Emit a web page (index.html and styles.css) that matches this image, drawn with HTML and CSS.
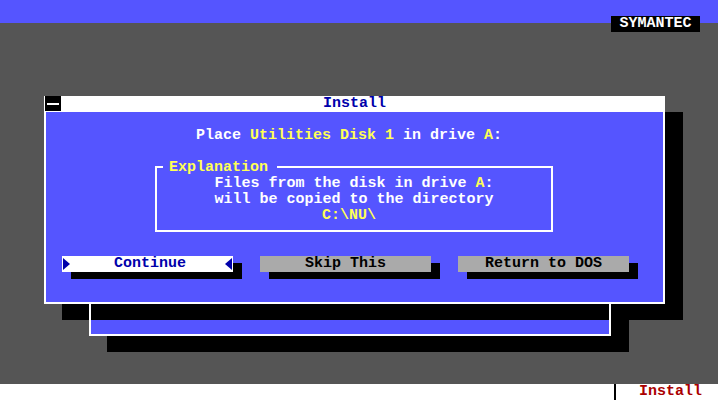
FILE: index.html
```html
<!DOCTYPE html>
<html lang="en">
<head>
    <meta charset="UTF-8">
    <title>Install</title>
    <link rel="stylesheet" href="styles.css">
</head>
<body>
    <div class="screen">
        <div class="topbar">
            <div class="brand">SYMANTEC</div>
        </div>

        <div class="desk">
            <!-- window left behind from the previous step -->
            <div class="back-shadow"></div>
            <div class="dialog-shadow"></div>
            <div class="back-window"></div>

            <div class="dialog">
                <div class="titlebar">
                    <span class="close-box"><span class="close-bar"></span></span>
                    <span class="title">Install</span>
                </div>

                <div class="prompt">Place <span class="hi">Utilities Disk 1</span> in drive <span class="hi">A</span>:</div>

                <div class="explain">
                    <span class="legend">Explanation</span>
                    <div class="line">Files from the disk in drive <span class="hi">A</span>:</div>
                    <div class="line">will be copied to the directory</div>
                    <div class="line path"><span class="hi">C:\NU\</span></div>
                </div>

                <div class="buttons">
                    <div class="btn btn-active">
                        <span class="arrow-right"></span>
                        <span class="btn-label">Continue</span>
                        <span class="arrow-left"></span>
                    </div>
                    <div class="btn">Skip This</div>
                    <div class="btn">Return to DOS</div>
                </div>
            </div>
        </div>

        <div class="statusbar">
            <span class="divider"></span>
            <span class="status-text">Install</span>
        </div>
    </div>
</body>
</html>
```

FILE: styles.css
```css
body {
    margin: 0;
    padding: 0;
    background-color: #555555;
    font-family: "Liberation Mono", "DejaVu Sans Mono", monospace;
    font-size: 15px;
    font-weight: bold;
    line-height: 16px;
}

.screen {
    width: 718px;
    height: 400px;
    display: flex;
    flex-direction: column;
    overflow: hidden;
}

.topbar {
    height: 23px;
    background-color: #5555ff;
    position: relative;
}

.brand {
    position: absolute;
    top: 16px;
    right: 18px;
    width: 89px;
    height: 16px;
    background-color: #000;
    color: #fff;
    text-align: center;
    z-index: 2;
}

.desk {
    flex: 1;
    position: relative;
}

/* Windows on the desktop */
.dialog-shadow {
    position: absolute;
    left: 62px;
    top: 89px;
    width: 621px;
    height: 208px;
    background-color: #000;
}

.back-shadow {
    position: absolute;
    left: 107px;
    top: 297px;
    width: 522px;
    height: 32px;
    background-color: #000;
}

.back-window {
    position: absolute;
    left: 89px;
    top: 281px;
    width: 522px;
    height: 32px;
    box-sizing: border-box;
    border: 2px solid #fff;
    border-top: none;
    background: linear-gradient(#000 0, #000 16px, #5555ff 16px);
}

.dialog {
    position: absolute;
    left: 44px;
    top: 73px;
    width: 621px;
    height: 208px;
    box-sizing: border-box;
    border: 2px solid #fff;
    border-top: none;
    background-color: #5555ff;
    color: #fff;
}

.titlebar {
    height: 16px;
    margin: 0 -2px;
    background-color: #fff;
    color: #0000aa;
    text-align: center;
    position: relative;
}

.close-box {
    position: absolute;
    left: 1px;
    top: 0;
    width: 16px;
    height: 15px;
    background-color: #000;
}

.close-bar {
    position: absolute;
    left: 2px;
    top: 7px;
    width: 12px;
    height: 2px;
    background-color: #fff;
}

.hi {
    color: #ffff55;
}

.prompt {
    margin-top: 16px;
    padding-left: 150px;
    height: 16px;
    white-space: pre;
}

.explain {
    position: relative;
    margin: 22px 0 0 109px;
    width: 398px;
    box-sizing: border-box;
    border: 2px solid #fff;
    padding: 8px 0 6px;
    text-align: center;
}

.legend {
    position: absolute;
    left: 6px;
    top: -8px;
    padding: 0 9px 0 6px;
    background-color: #5555ff;
    color: #ffff55;
}

.line {
    height: 16px;
    white-space: pre;
}

.path {
    padding-right: 10px;
}

.buttons {
    display: flex;
    gap: 27px;
    margin-top: 24px;
    padding-left: 16px;
}

.btn {
    width: 171px;
    height: 16px;
    background-color: #aaaaaa;
    color: #000;
    text-align: center;
    box-shadow: 9px 7px 0 #000;
}

.btn-active {
    background-color: #fff;
    color: #0000aa;
    display: flex;
    align-items: center;
    justify-content: space-between;
    padding: 0 1px 0 1px;
    box-sizing: border-box;
}

.btn-label {
    flex: 1;
    padding-left: 5px;
}

.arrow-right {
    width: 0;
    height: 0;
    border-left: 7px solid #0000aa;
    border-top: 6px solid transparent;
    border-bottom: 6px solid transparent;
}

.arrow-left {
    width: 0;
    height: 0;
    border-right: 7px solid #0000aa;
    border-top: 6px solid transparent;
    border-bottom: 6px solid transparent;
}

.statusbar {
    height: 16px;
    background-color: #fff;
    display: flex;
    align-items: stretch;
    padding-left: 614px;
}

.divider {
    width: 2px;
    background-color: #000;
}

.status-text {
    margin-left: 23px;
    color: #aa0000;
}
```
